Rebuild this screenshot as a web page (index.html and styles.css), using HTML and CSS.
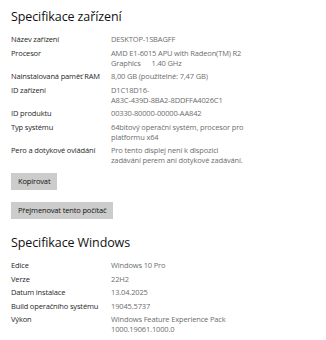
FILE: index.html
```html
<!DOCTYPE html>
<html lang="cs">
<head>
<meta charset="utf-8">
<link rel="stylesheet" href="styles.css">
</head>
<body>
<div class="page">
  <h1 class="title">Specifikace zařízení</h1>
  <div class="specs">
    <div class="label">Název zařízení</div><div class="value">DESKTOP-1SBAGFF</div>
    <div class="label">Procesor</div><div class="value">AMD E1-6015 APU with Radeon(TM) R2<br>Graphics&nbsp;&nbsp;&nbsp;&nbsp;&nbsp;&nbsp;1.40 GHz</div>
    <div class="label">Nainstalovaná paměť RAM</div><div class="value">8,00 GB (použitelné: 7,47 GB)</div>
    <div class="label">ID zařízení</div><div class="value">D1C18D16-<br>A83C-439D-8BA2-8DDFFA4026C1</div>
    <div class="label">ID produktu</div><div class="value">00330-80000-00000-AA842</div>
    <div class="label">Typ systému</div><div class="value">64bitový operační systém, procesor pro<br>platformu x64</div>
    <div class="label">Pero a dotykové ovládání</div><div class="value">Pro tento displej není k dispozici<br>zadávání perem ani dotykové zadávání.</div>
  </div>
  <div class="buttons">
    <button class="btn">Kopírovat</button>
    <button class="btn">Přejmenovat tento počítač</button>
  </div>
  <h1 class="title title-win">Specifikace Windows</h1>
  <div class="specs">
    <div class="label">Edice</div><div class="value">Windows 10 Pro</div>
    <div class="label">Verze</div><div class="value">22H2</div>
    <div class="label">Datum instalace</div><div class="value">13.04.2025</div>
    <div class="label">Build operačního systému</div><div class="value">19045.5737</div>
    <div class="label">Výkon</div><div class="value">Windows Feature Experience Pack<br>1000.19061.1000.0</div>
  </div>
</div>
</body>
</html>
```

FILE: styles.css
```css
html, body {
  margin: 0;
  padding: 0;
  background: #ffffff;
}
.page {
  padding: 8px 0 0 11px;
  font-family: "Open Sans", "Noto Sans", sans-serif;
  font-size: 7.5px;
  letter-spacing: -0.15px;
  color: #1a1a1a;
}
.title {
  margin: 0;
  font-size: 12.5px;
  font-weight: 400;
  letter-spacing: -0.1px;
  line-height: 18px;
  color: #111111;
}
.title-win {
  margin-top: 15px;
}
.specs {
  display: grid;
  grid-template-columns: 100px 1fr;
  row-gap: 3.5px;
  margin-top: 8px;
  line-height: 10px;
}
.label {
  color: #1f1f1f;
}
.value {
  color: #6e6e6e;
}
.buttons {
  display: flex;
  flex-direction: column;
  align-items: flex-start;
  gap: 12px;
  margin-top: 8px;
}
.btn {
  display: block;
  box-sizing: border-box;
  height: 17px;
  margin: 0;
  padding: 0 7px;
  border: none;
  background: #cccccc;
  color: #111111;
  font-family: inherit;
  font-size: 7.5px;
  letter-spacing: -0.15px;
  line-height: 17px;
}
```
